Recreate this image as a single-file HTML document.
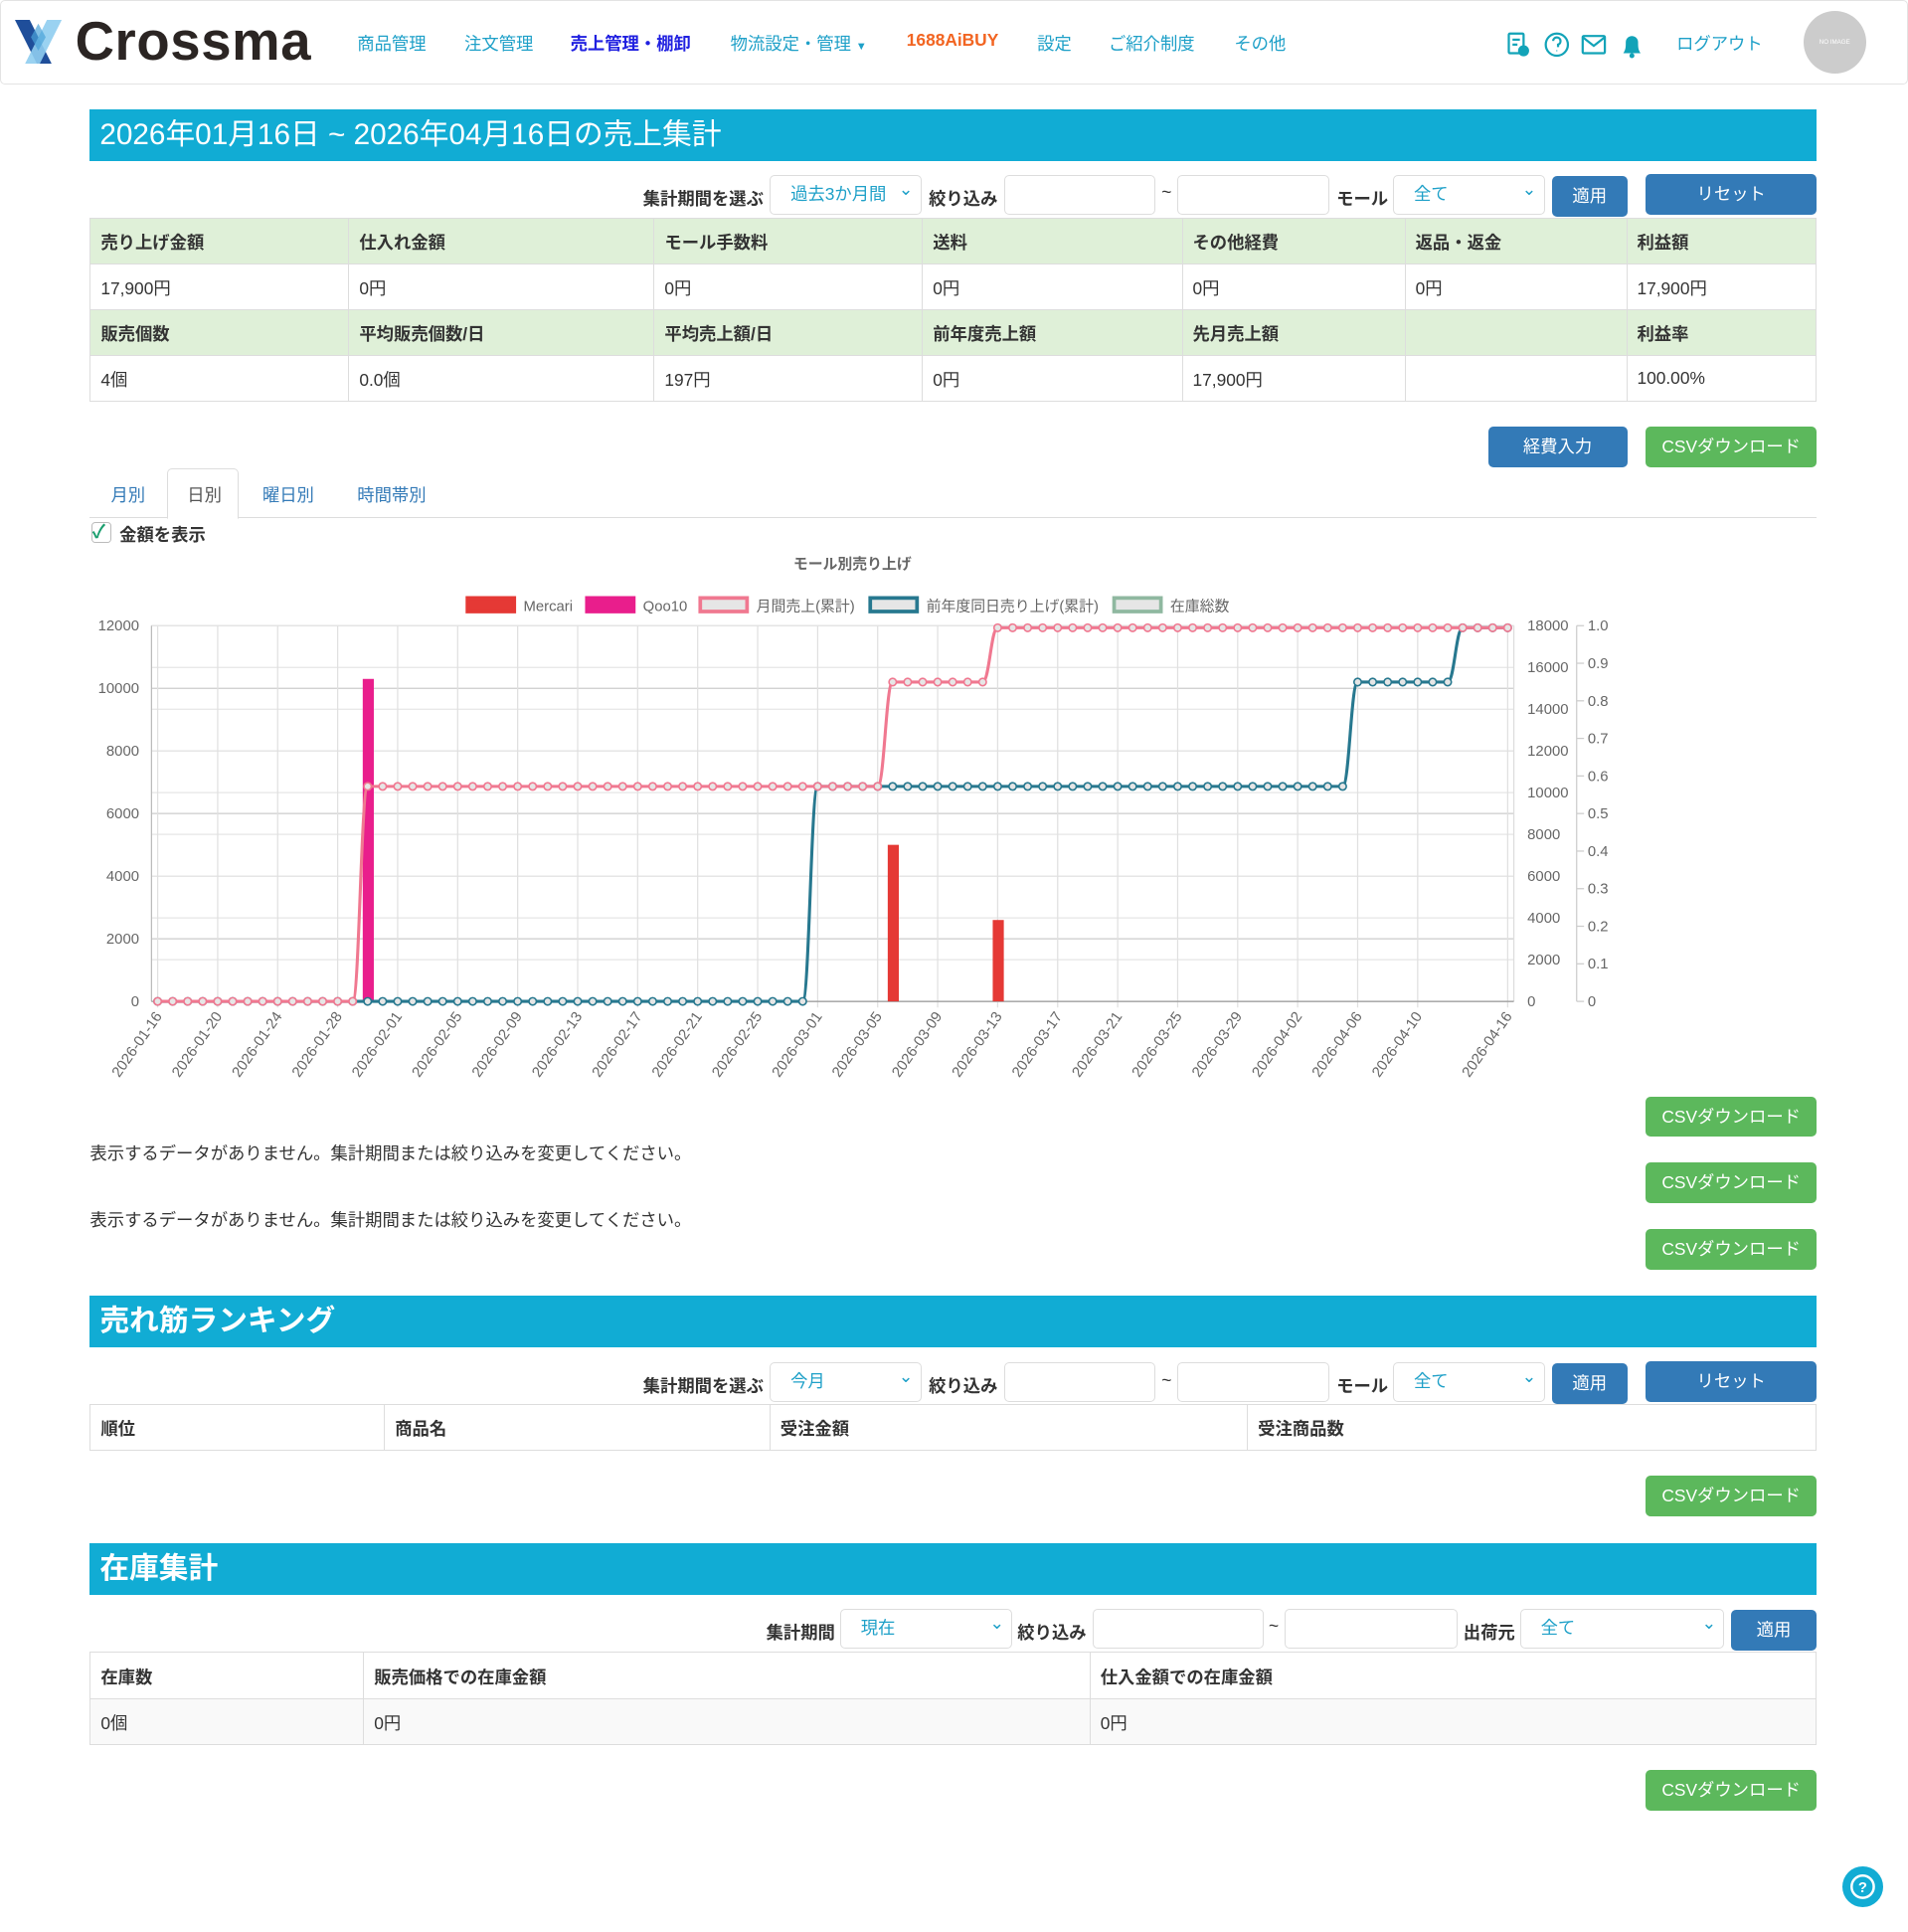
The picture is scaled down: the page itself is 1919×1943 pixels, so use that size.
<!DOCTYPE html>
<html><head><meta charset="utf-8">
<style>
html,body{margin:0;padding:0;background:#fff}
body{width:1549px;height:1568px;zoom:1.23886;position:relative;overflow:hidden;font-family:"Liberation Sans","Noto Sans CJK JP",sans-serif;color:#333;font-size:14px}
.a{position:absolute}
.hdr{left:0;top:0;width:1547px;height:67px;border:1px solid #e3e3e3;border-radius:4px;background:#fff}
.nav{top:24px;font-size:14px;color:#1ea0c8;white-space:nowrap}
.ban{left:73px;width:1402px;height:42px;background:#11acd4;color:#fff;font-size:24px;line-height:42px;padding-left:8px;box-sizing:border-box}
.lbl{font-weight:bold;font-size:14px;color:#333}
.sel{height:32px;border:1px solid #ddd;border-radius:4px;box-sizing:border-box;color:#1ea0c8;font-size:14px;line-height:30px;padding-left:16px;background:#fff}
.sel:after{content:"⌄";position:absolute;right:6px;top:-4px;color:#1ea0c8}
.inp{height:32px;border:1px solid #ddd;border-radius:4px;box-sizing:border-box;background:#fff}
.btn{height:33px;border-radius:4px;color:#fff;font-size:14px;text-align:center;line-height:33px;box-sizing:border-box}
.blue{background:#337ab7}
.green{background:#5cb85c}
table{border-collapse:collapse;position:absolute;left:73px;width:1402px;font-size:14px}
td{border:1px solid #ddd;height:37px;padding:0 8px;box-sizing:border-box}
tr.g td{background:#dff0d8;font-weight:bold}
.msg{left:73px;font-size:14px}
</style></head><body>
<div class="a hdr"></div>
<svg class="a" style="left:12px;top:16px" width="40" height="36" viewBox="0 0 40 36">
<polygon points="0,0 12,0 30,36 18,36" fill="#1f4e9a"/>
<polygon points="26,0 38,0 20,36 8,36" fill="#8fcdef" opacity="0.9"/>
<polygon points="13,14 19,25 25,14 19,3" fill="#4aa3d8" opacity="0.7"/>
</svg>
<div class="a" style="left:61px;top:8px;font-size:44px;font-weight:bold;color:#2b2523;letter-spacing:0.5px">Crossma</div>
<div class="a nav" style="left:290px">商品管理</div>
<div class="a nav" style="left:377px">注文管理</div>
<div class="a nav" style="left:463px;color:#2020e0;font-weight:bold">売上管理・棚卸</div>
<div class="a nav" style="left:593px">物流設定・管理 <span style="font-size:9px">▼</span></div>
<div class="a nav" style="left:736px;color:#f26522;font-weight:bold">1688AiBUY</div>
<div class="a nav" style="left:842px">設定</div>
<div class="a nav" style="left:900px">ご紹介制度</div>
<div class="a nav" style="left:1002px">その他</div>
<svg class="a" style="left:1223px;top:24px" width="120" height="24" viewBox="0 0 120 24">
<g fill="none" stroke="#12a3b8" stroke-width="1.8">
<rect x="2" y="3" width="12" height="16" rx="1"/><line x1="5" y1="8" x2="11" y2="8"/><line x1="5" y1="12" x2="9" y2="12"/>
<circle cx="41" cy="12" r="9"/><path d="M38 9a3 3 0 1 1 4 3v2"/>
<rect x="62" y="5" width="18" height="14" rx="1"/><path d="M62 6l9 7 9-7"/>
</g>
<circle cx="14" cy="17" r="4.5" fill="#12a3b8"/><circle cx="41" cy="17" r="0.5" fill="#12a3b8"/>
<path d="M95 19c2-3 2-5 2-9a5 5 0 0 1 10 0c0 4 0 6 2 9z" fill="#12a3b8"/><circle cx="102" cy="21" r="2" fill="#12a3b8"/>
</svg>
<div class="a nav" style="left:1361px">ログアウト</div>
<div class="a" style="left:1464px;top:9px;width:51px;height:51px;border-radius:50%;background:#ccc;color:#fff;font-size:5px;line-height:51px;text-align:center">NO IMAGE</div>

<div class="a ban" style="top:89px">2026年01月16日 ~ 2026年04月16日の売上集計</div>
<div class="a lbl" style="left:522px;top:150px">集計期間を選ぶ</div>
<div class="a sel" style="left:625px;top:142px;width:123px">過去3か月間</div>
<div class="a lbl" style="left:754px;top:150px">絞り込み</div>
<div class="a inp" style="left:815px;top:142px;width:123px"></div>
<div class="a" style="left:943px;top:148px">~</div>
<div class="a inp" style="left:956px;top:142px;width:123px"></div>
<div class="a lbl" style="left:1085px;top:150px">モール</div>
<div class="a sel" style="left:1131px;top:142px;width:123px">全て</div>
<div class="a btn blue" style="left:1260px;top:143px;width:61px">適用</div>
<div class="a btn blue" style="left:1336px;top:141px;width:139px">リセット</div>
<table style="top:177px">
<colgroup><col style="width:210px"><col style="width:248px"><col style="width:218px"><col style="width:211px"><col style="width:181px"><col style="width:180px"><col style="width:154px"></colgroup>
<tr class="g"><td>売り上げ金額</td><td>仕入れ金額</td><td>モール手数料</td><td>送料</td><td>その他経費</td><td>返品・返金</td><td>利益額</td></tr>
<tr><td>17,900円</td><td>0円</td><td>0円</td><td>0円</td><td>0円</td><td>0円</td><td>17,900円</td></tr>
<tr class="g"><td>販売個数</td><td>平均販売個数/日</td><td>平均売上額/日</td><td>前年度売上額</td><td>先月売上額</td><td></td><td>利益率</td></tr>
<tr><td>4個</td><td>0.0個</td><td>197円</td><td>0円</td><td>17,900円</td><td></td><td>100.00%</td></tr>
</table>
<div class="a btn blue" style="left:1208px;top:346px;width:113px">経費入力</div>
<div class="a btn green" style="left:1336px;top:346px;width:139px">CSVダウンロード</div>

<div class="a" style="left:73px;top:420px;width:1402px;border-top:1px solid #ddd"></div>
<div class="a" style="left:136px;top:380px;width:58px;height:41px;border:1px solid #ddd;border-bottom:1px solid #fff;border-radius:4px 4px 0 0;background:#fff;box-sizing:border-box"></div>
<div class="a" style="left:90px;top:391px;color:#337ab7">月別</div>
<div class="a" style="left:152px;top:391px;color:#555">日別</div>
<div class="a" style="left:213px;top:391px;color:#337ab7">曜日別</div>
<div class="a" style="left:290px;top:391px;color:#337ab7">時間帯別</div>
<div class="a" style="left:74px;top:424px;width:15px;height:15px;border:1px solid #bbb;border-radius:3px;color:#1a9e6e;font-size:15px;line-height:15px;font-weight:bold">✓</div>
<div class="a lbl" style="left:97px;top:423px">金額を表示</div>

<svg id="ch" class="a" style="left:0;top:440px" width="1549" height="450" viewBox="0 440 1549 450"></svg>

<div class="a btn green" style="left:1336px;top:890px;width:139px">CSVダウンロード</div>
<div class="a msg" style="top:925px">表示するデータがありません。集計期間または絞り込みを変更してください。</div>
<div class="a btn green" style="left:1336px;top:944px;width:139px">CSVダウンロード</div>
<div class="a msg" style="top:979px">表示するデータがありません。集計期間または絞り込みを変更してください。</div>
<div class="a btn green" style="left:1336px;top:998px;width:139px">CSVダウンロード</div>

<div class="a ban" style="top:1052px;font-weight:bold">売れ筋ランキング</div>
<div class="a lbl" style="left:522px;top:1114px">集計期間を選ぶ</div>
<div class="a sel" style="left:625px;top:1106px;width:123px">今月</div>
<div class="a lbl" style="left:754px;top:1114px">絞り込み</div>
<div class="a inp" style="left:815px;top:1106px;width:123px"></div>
<div class="a" style="left:943px;top:1112px">~</div>
<div class="a inp" style="left:956px;top:1106px;width:123px"></div>
<div class="a lbl" style="left:1085px;top:1114px">モール</div>
<div class="a sel" style="left:1131px;top:1106px;width:123px">全て</div>
<div class="a btn blue" style="left:1260px;top:1107px;width:61px">適用</div>
<div class="a btn blue" style="left:1336px;top:1105px;width:139px">リセット</div>
<table style="top:1140px">
<colgroup><col style="width:239px"><col style="width:313px"><col style="width:388px"><col style="width:462px"></colgroup>
<tr><td style="font-weight:bold">順位</td><td style="font-weight:bold">商品名</td><td style="font-weight:bold">受注金額</td><td style="font-weight:bold">受注商品数</td></tr>
</table>
<div class="a btn green" style="left:1336px;top:1198px;width:139px">CSVダウンロード</div>

<div class="a ban" style="top:1253px;font-weight:bold">在庫集計</div>
<div class="a lbl" style="left:622px;top:1314px">集計期間</div>
<div class="a sel" style="left:682px;top:1306px;width:140px">現在</div>
<div class="a lbl" style="left:826px;top:1314px">絞り込み</div>
<div class="a inp" style="left:887px;top:1306px;width:139px"></div>
<div class="a" style="left:1030px;top:1312px">~</div>
<div class="a inp" style="left:1043px;top:1306px;width:140px"></div>
<div class="a lbl" style="left:1188px;top:1314px">出荷元</div>
<div class="a sel" style="left:1234px;top:1306px;width:166px">全て</div>
<div class="a btn blue" style="left:1405px;top:1307px;width:70px">適用</div>
<table style="top:1341px">
<colgroup><col style="width:222px"><col style="width:590px"><col style="width:590px"></colgroup>
<tr><td style="font-weight:bold;height:38px">在庫数</td><td style="font-weight:bold">販売価格での在庫金額</td><td style="font-weight:bold">仕入金額での在庫金額</td></tr>
<tr><td style="background:#f9f9f9;height:37px">0個</td><td style="background:#f9f9f9">0円</td><td style="background:#f9f9f9">0円</td></tr>
</table>
<div class="a btn green" style="left:1336px;top:1437px;width:139px">CSVダウンロード</div>
<div class="a" style="left:1496px;top:1515px;width:33px;height:33px;border-radius:50%;background:#12acd4"></div>
<svg class="a" style="left:1496px;top:1515px" width="33" height="33"><circle cx="16.5" cy="16.5" r="9" fill="none" stroke="#fff" stroke-width="2"/><text x="16.5" y="21" text-anchor="middle" font-size="12" font-weight="bold" fill="#fff" font-family="Liberation Sans">?</text></svg>

<script>
(function(){
var s=document.getElementById('ch'),h='';
var L=123,R=1229,T=508,B=813,N=91,x0=128,st=(1224-128)/90;
function X(i){return x0+i*st}
function YL(v){return B-v/12000*(B-T)}
function YR(v){return B-v/18000*(B-T)}
for(var v=0;v<=12000;v+=2000){var y=YL(v);h+='<line x1="'+L+'" x2="'+R+'" y1="'+y+'" y2="'+y+'" stroke="#ccc"/>';h+='<text x="113" y="'+(y+4)+'" text-anchor="end" font-size="12" fill="#666">'+v+'</text>';}
for(var v=0;v<=18000;v+=2000){var y=YR(v);h+='<line x1="'+L+'" x2="'+R+'" y1="'+y+'" y2="'+y+'" stroke="#e6e6e6"/>';h+='<text x="1240" y="'+(y+4)+'" font-size="12" fill="#666">'+v+'</text>';}
for(var k=0;k<=10;k++){var y=B-k/10*(B-T);h+='<line x1="1280" x2="1286" y1="'+y+'" y2="'+y+'" stroke="#ccc"/><text x="1289" y="'+(y+4)+'" font-size="12" fill="#666">'+(k==0?'0':k==10?'1.0':(k/10).toFixed(1))+'</text>';}
h+='<line x1="1280" x2="1280" y1="'+T+'" y2="'+B+'" stroke="#ccc"/>';
var d0=new Date(Date.UTC(2026,0,16));
var ticks=[];for(var i=0;i<N-3;i+=4)ticks.push(i);ticks.push(N-1);
ticks.forEach(function(i){var x=X(i);h+='<line x1="'+x+'" x2="'+x+'" y1="'+T+'" y2="'+(B+5)+'" stroke="#e0e0e0"/>';var d=new Date(d0.getTime()+i*864e5);var t=d.toISOString().slice(0,10);h+='<text transform="translate('+(x+4)+','+(B+12)+') rotate(-55)" text-anchor="end" font-size="12" fill="#666">'+t+'</text>';});
h+='<line x1="'+L+'" x2="'+L+'" y1="'+T+'" y2="'+B+'" stroke="#bbb"/><line x1="'+R+'" x2="'+R+'" y1="'+T+'" y2="'+B+'" stroke="#ddd"/><line x1="'+L+'" x2="'+R+'" y1="'+B+'" y2="'+B+'" stroke="#999"/>';
function bar(i,v,c){var y=YL(v);h+='<rect x="'+(X(i)-4)+'" y="'+y+'" width="9" height="'+(B-y)+'" fill="'+c+'"/>';}
bar(14,10300,'#e91e8c');bar(49,5000,'#e53935');bar(56,2600,'#e53935');
function line(vals,c){var p='M'+X(0)+' '+YR(vals[0]);for(var i=1;i<N;i++){var xa=X(i-1),xb=X(i);p+=' C'+(xa+st*0.45)+' '+YR(vals[i-1])+' '+(xb-st*0.45)+' '+YR(vals[i])+' '+xb+' '+YR(vals[i]);}
h+='<path d="'+p+'" fill="none" stroke="'+c+'" stroke-width="2.5"/>';for(var i=0;i<N;i++)h+='<circle cx="'+X(i)+'" cy="'+YR(vals[i])+'" r="3" fill="#e6e6e6" stroke="'+c+'" stroke-width="1.3"/>';}
var pk=[],tl=[];for(var i=0;i<N;i++){pk.push(i<14?0:i<49?10300:i<56?15300:17900);tl.push(i<44?0:i<80?10300:i<87?15300:17900);}
line(tl,'#27788f');line(pk,'#f07890');
h+='<text x="692" y="462" text-anchor="middle" font-size="12" font-weight="bold" fill="#666">モール別売り上げ</text>';
var lg=[[378,'#e53935','#e53935','Mercari'],[475,'#e91e8c','#e91e8c','Qoo10'],[567,'#e6e6e6','#f07890','月間売上(累計)'],[705,'#e6e6e6','#27788f','前年度同日売り上げ(累計)'],[903,'#e6e6e6','#8fb8a0','在庫総数']];
lg.forEach(function(o){h+='<rect x="'+(o[0]+1.5)+'" y="485.5" width="38" height="11" fill="'+o[1]+'" stroke="'+o[2]+'" stroke-width="3"/><text x="'+(o[0]+47)+'" y="496" font-size="12" fill="#666">'+o[3]+'</text>';});
s.innerHTML=h;
})();
</script>
</body></html>
